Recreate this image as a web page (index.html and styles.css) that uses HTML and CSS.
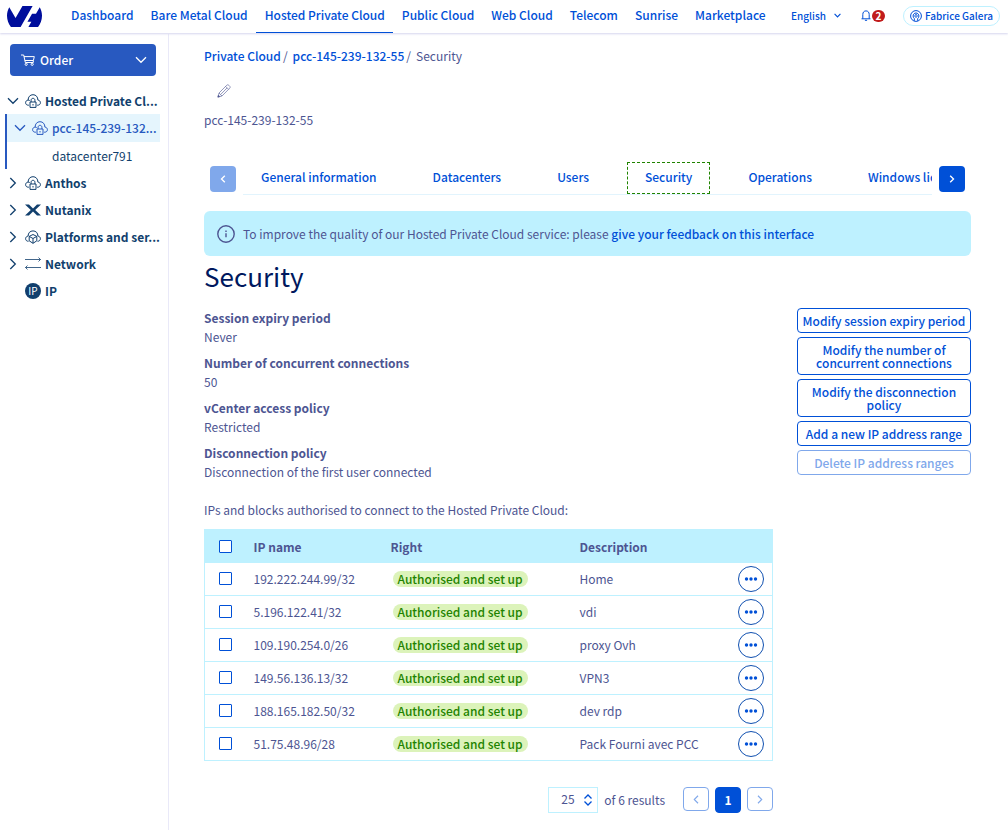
FILE: index.html
```html
<!DOCTYPE html>
<html lang="en">
<head>
<meta charset="utf-8">
<title>Security - Hosted Private Cloud</title>
<link rel="stylesheet" href="styles.css">
</head>
<body>
<svg class="sprite" aria-hidden="true">
  <symbol id="cloud-lock" viewBox="0 0 16 14"><path d="M4 11.200H3.300C1.700 11.200.6 10.200.6 8.700c0-1.500 1.100-2.500 2.500-2.600C3.100 3 5 .7 8 .7s4.900 2.300 4.900 5.400c1.400.1 2.500 1.100 2.500 2.600s-1.100 2.500-2.700 2.500H12M3.100 6.100c.8 0 1.300.2 1.700.7M5 8h6v5.400H5zM6.100 8V6.300c0-1.200.8-2 1.900-2s1.900.8 1.900 2V8M8 10v1.500"/></symbol>
  <symbol id="cloud-cube" viewBox="0 0 16 14"><path d="M3.500 11.300C1.700 11.300.6 10.200.6 8.700c0-1.400 1.100-2.500 2.500-2.600C3.100 3 5 .9 8 .9s4.900 2.100 4.900 5.200c1.400.1 2.500 1.200 2.500 2.600s-1.100 2.600-2.900 2.600M8 4.500l3.800 1.900v4.400L8 13.300l-3.800-2.500V6.400zM4.200 6.400L8 8.500l3.800-2.100M8 8.500v4.800"/></symbol>
  <symbol id="down" viewBox="0 0 12 8"><path d="M1 1.300l5 5 5-5"/></symbol>
  <symbol id="right" viewBox="0 0 8 12"><path d="M1.300 1l5 5-5 5"/></symbol>
  <symbol id="left" viewBox="0 0 8 12"><path d="M6.700 1l-5 5 5 5"/></symbol>
  <symbol id="dots" viewBox="0 0 14 4"><circle cx="2.500" cy="2" r="1.700"/><circle cx="7" cy="2" r="1.700"/><circle cx="11.500" cy="2" r="1.700"/></symbol>
</svg>

<header class="topbar">
  <a class="logo" href="#" aria-label="OVHcloud"><svg viewBox="0 4.85 24 14.3"><path d="M19.881 10.095l2.563-4.450C23.434 7.389 24 9.404 24 11.555c0 2.880-1.017 5.523-2.710 7.594h-6.620l2.040-3.541h-2.696l3.176-5.513zM17.561 4.852L9.333 19.149H2.709C1.014 17.077 0 14.435 0 11.555c0-2.152.57-4.170 1.561-5.918l4.294 7.449 4.751-8.234z"/></svg></a>
  <nav class="mainnav" aria-label="Universes">
    <a href="#">Dashboard</a>
    <a href="#">Bare Metal Cloud</a>
    <a href="#" class="current" aria-current="page">Hosted Private Cloud</a>
    <a href="#">Public Cloud</a>
    <a href="#">Web Cloud</a>
    <a href="#">Telecom</a>
    <a href="#">Sunrise</a>
    <a href="#">Marketplace</a>
  </nav>
  <div class="tools">
    <button type="button" class="language">English <svg class="line chev-s"><use href="#down"/></svg></button>
    <button type="button" class="notif" aria-label="Notifications, 2 unread">
      <svg class="line bell" viewBox="0 0 10 11"><path d="M.5 8.800h9M1.800 8.800V4.500C1.800 2.300 3 .9 5 .9s3.200 1.400 3.200 3.600v4.300M3.900 10.300h2.200"/></svg><span class="count">2</span>
    </button>
    <button type="button" class="account"><svg class="line user" viewBox="0 0 12 12"><circle cx="6" cy="6" r="5.400"/><path d="M4.300 10.800V8.500C3.500 7.900 3.100 7 3.100 6c0-1.700 1.200-3 2.900-3s2.900 1.300 2.900 3c0 1-.4 1.900-1.200 2.500v2.300M5 6.500c0 1 2 1 2 0V5.300c0-1-2-1-2 0z"/></svg>Fabrice Galera</button>
  </div>
</header>

<div class="shell">
  <aside class="sidebar">
    <button type="button" class="order">
      <svg class="line cart" viewBox="0 0 14 12"><path d="M0 1h2.700l1.600 7.500h8M3 2.600h10.300l-.9 3.900H3.900M12.300 6.500v2"/><circle cx="5.200" cy="10.300" r="1.100"/><circle cx="11.200" cy="10.300" r="1.100"/></svg>
      <span>Order</span>
      <svg class="line chev"><use href="#down"/></svg>
    </button>
    <ul class="tree">
      <li><a class="node" href="#" title="Hosted Private Cloud"><svg class="line chev"><use href="#down"/></svg><svg class="line ico"><use href="#cloud-lock"/></svg><span>Hosted Private Cl...</span></a>
        <ul class="branch">
          <li><a class="node active" href="#" title="pcc-145-239-132-55"><svg class="line chev"><use href="#down"/></svg><svg class="line ico"><use href="#cloud-lock"/></svg><span>pcc-145-239-132...</span></a></li>
          <li><a class="node leaf" href="#"><span>datacenter791</span></a></li>
        </ul>
      </li>
      <li><a class="node" href="#"><svg class="line chev"><use href="#right"/></svg><svg class="line ico"><use href="#cloud-lock"/></svg><span>Anthos</span></a></li>
      <li><a class="node" href="#"><svg class="line chev"><use href="#right"/></svg><svg class="ico" viewBox="0 0 16 14"><path fill="currentColor" d="M0 1.500h4L8 5.400l4-3.900h4L10.200 7l5.800 5.500h-4L8 8.600l-4 3.900H0L5.800 7z"/></svg><span>Nutanix</span></a></li>
      <li><a class="node" href="#" title="Platforms and services"><svg class="line chev"><use href="#right"/></svg><svg class="line ico"><use href="#cloud-cube"/></svg><span>Platforms and ser...</span></a></li>
      <li><a class="node" href="#"><svg class="line chev"><use href="#right"/></svg><svg class="line ico thin" viewBox="0 0 16 14"><path d="M0 2.500h15.500M13.500.5l2 2-2 2M16 10.500H.5M2.500 8.500l-2 2 2 2"/></svg><span>Network</span></a></li>
      <li><a class="node" href="#"><i class="chev"></i><i class="ip-ico" aria-hidden="true">IP</i><span>IP</span></a></li>
    </ul>
  </aside>

  <main class="main">
    <nav class="crumbs" aria-label="Breadcrumb"><a href="#">Private Cloud</a><i>/</i><a href="#">pcc-145-239-132-55</a><i>/</i><span>Security</span></nav>
    <button type="button" class="edit" aria-label="Edit name"><svg viewBox="0 0 14 14"><path d="M1 13l1-4L9.800 1.200c.6-.6 1.400-.5 2 .1l.9.900c.6.6.6 1.400 0 2L5 12zM2 9l3 3M8.600 2.400l3 3M3.800 10.300l6.300-6.400"/><path class="tip" d="M.8 13.200l.6-2 1.400 1.400z"/></svg></button>
    <p class="name">pcc-145-239-132-55</p>

    <div class="tabs">
      <button type="button" class="step" disabled aria-label="Previous tabs"><svg class="line"><use href="#left"/></svg></button>
      <nav class="tablist" aria-label="Service sections">
        <a href="#">General information</a>
        <a href="#">Datacenters</a>
        <a href="#">Users</a>
        <a href="#" class="focus" aria-current="page">Security</a>
        <a href="#">Operations</a>
        <a href="#">Windows licence</a>
      </nav>
      <button type="button" class="step" aria-label="Next tabs"><svg class="line"><use href="#right"/></svg></button>
    </div>

    <div class="notice">
      <svg viewBox="0 0 18 18"><circle cx="9" cy="9" r="8.200"/><path d="M9 8.300v4M9 5.500v1.500"/></svg>
      <p>To improve the quality of our Hosted Private Cloud service: please <a href="#">give your feedback on this interface</a></p>
    </div>

    <h1>Security</h1>

    <div class="columns">
      <section class="content">
        <dl class="facts">
          <dt>Session expiry period</dt><dd>Never</dd>
          <dt>Number of concurrent connections</dt><dd>50</dd>
          <dt>vCenter access policy</dt><dd>Restricted</dd>
          <dt>Disconnection policy</dt><dd>Disconnection of the first user connected</dd>
        </dl>
        <p class="intro">IPs and blocks authorised to connect to the Hosted Private Cloud:</p>
        <table class="grid">
          <colgroup><col class="c-check"><col class="c-ip"><col class="c-right"><col><col class="c-act"></colgroup>
          <thead><tr><th><input type="checkbox" aria-label="Select all"></th><th>IP name</th><th>Right</th><th>Description</th><th></th></tr></thead>
          <tbody>
            <tr><td><input type="checkbox" aria-label="Select 192.222.244.99/32"></td><td>192.222.244.99/32</td><td><span class="badge">Authorised and set up</span></td><td>Home</td><td><button type="button" class="more" aria-label="Actions"><svg><use href="#dots"/></svg></button></td></tr>
            <tr><td><input type="checkbox" aria-label="Select 5.196.122.41/32"></td><td>5.196.122.41/32</td><td><span class="badge">Authorised and set up</span></td><td>vdi</td><td><button type="button" class="more" aria-label="Actions"><svg><use href="#dots"/></svg></button></td></tr>
            <tr><td><input type="checkbox" aria-label="Select 109.190.254.0/26"></td><td>109.190.254.0/26</td><td><span class="badge">Authorised and set up</span></td><td>proxy Ovh</td><td><button type="button" class="more" aria-label="Actions"><svg><use href="#dots"/></svg></button></td></tr>
            <tr><td><input type="checkbox" aria-label="Select 149.56.136.13/32"></td><td>149.56.136.13/32</td><td><span class="badge">Authorised and set up</span></td><td>VPN3</td><td><button type="button" class="more" aria-label="Actions"><svg><use href="#dots"/></svg></button></td></tr>
            <tr><td><input type="checkbox" aria-label="Select 188.165.182.50/32"></td><td>188.165.182.50/32</td><td><span class="badge">Authorised and set up</span></td><td>dev rdp</td><td><button type="button" class="more" aria-label="Actions"><svg><use href="#dots"/></svg></button></td></tr>
            <tr><td><input type="checkbox" aria-label="Select 51.75.48.96/28"></td><td>51.75.48.96/28</td><td><span class="badge">Authorised and set up</span></td><td>Pack Fourni avec PCC</td><td><button type="button" class="more" aria-label="Actions"><svg><use href="#dots"/></svg></button></td></tr>
          </tbody>
        </table>
        <div class="pager">
          <label class="size"><select aria-label="Results per page"><option>25</option><option>50</option></select><svg class="line" viewBox="0 0 10 12"><path d="M1.500 4.500L5 1l3.500 3.500M1.500 7.500L5 11l3.500-3.500"/></svg></label>
          <span class="total">of 6 results</span>
          <button type="button" class="page" disabled aria-label="Previous page"><svg class="line"><use href="#left"/></svg></button>
          <button type="button" class="page on">1</button>
          <button type="button" class="page" disabled aria-label="Next page"><svg class="line"><use href="#right"/></svg></button>
        </div>
      </section>
      <aside class="actions">
        <button type="button">Modify session expiry period</button>
        <button type="button">Modify the number of concurrent connections</button>
        <button type="button">Modify the disconnection policy</button>
        <button type="button">Add a new IP address range</button>
        <button type="button" disabled>Delete IP address ranges</button>
      </aside>
    </div>
  </main>
</div>
</body>
</html>
```
FILE: styles.css
```css
:root {
  --blue: #0050d7;
  --ink: #4d5592;
  --sky: #bef1ff;
  --faded: #80a8eb;
  --navy: #113f6d;
}
* { box-sizing: border-box; }
body {
  margin: 0;
  min-height: 100vh;
  display: flex;
  flex-direction: column;
  background: #fff;
  color: var(--ink);
  font: 12px/20px "Noto Sans CJK SC", "Noto Sans", sans-serif;
}
a { color: var(--blue); text-decoration: none; font-weight: 500; }
button, select { font: inherit; color: inherit; background: none; border: 0; padding: 0; margin: 0; }
p, ul, dl, dd, h1 { margin: 0; padding: 0; }
ul { list-style: none; }
i { font-style: normal; }
.sprite { display: none; }
svg { display: block; flex: none; }
.line { fill: none; stroke: currentColor; stroke-width: 1; }

.topbar {
  display: flex;
  align-items: center;
  height: 33px;
  padding: 0 8px 0 7px;
  box-shadow: 0 1px 2px #d5d5ee;
  position: relative;
}
.logo svg { width: 35px; height: 21px; fill: #000e9c; }
.mainnav { display: flex; margin-left: 20px; align-self: stretch; }
.mainnav a { display: flex; align-items: center; padding: 0 8px 2px 9px; white-space: nowrap; border-bottom: 1px solid transparent; }
.mainnav .current { border-color: var(--blue); }
.tools { display: flex; align-items: center; margin-left: auto; padding-bottom: 2px; color: var(--blue); font-size: 10px; font-weight: 500; }
.tools button { display: flex; align-items: center; white-space: nowrap; }
.chev-s { width: 7px; height: 5px; margin-left: 8px; stroke-width: 2; }
.notif { margin: 0 18px 0 20px; }
.bell { width: 10px; height: 11px; }
.count { width: 13px; height: 12px; border-radius: 6px; background: #c11b1b; color: #fff; font-weight: 700; line-height: 12px; text-align: center; margin-left: 1px; }
.tools .account { height: 20px; padding: 0 6px; border: 1px solid var(--sky); border-radius: 10px; gap: 3px; }
.user { width: 12px; height: 12px; }

.shell { display: flex; flex: 1; margin-top: 1px; }
.sidebar { width: 169px; flex: none; padding-top: 10px; border-right: 1px solid #e9e9f8; color: var(--navy); }
.order {
  display: flex; align-items: center; gap: 5px;
  width: 146px; height: 32px; margin: 0 0 11px 10px; padding: 0 9px 0 11px;
  background: #2859c0; color: #fff; border-radius: 4px; font-weight: 500;
}
.order .cart { width: 14px; height: 12px; }
.order .chev { margin-left: auto; width: 12px; stroke-width: 1.3; }
.node { display: flex; align-items: center; height: 27px; padding: 0 8px 0 7px; color: inherit; font-weight: 700; }
.node .chev { width: 12px; height: 12px; margin-right: 6px; stroke-width: 1.3; }
.chev { height: 8px; }
.ico { width: 16px; height: 14px; margin-right: 4px; }
.thin { stroke-width: .8; }
.node span { white-space: nowrap; }
.branch { margin: 0 8px 0 5px; border-left: 2px solid #2859c0; }
.branch .node { padding-right: 0; }
.node.active { height: 28px; background: #e5f5fd; color: #2859c0; font-weight: 500; }
.node.leaf { padding-left: 45px; font-weight: 400; }
.ip-ico { width: 16px; height: 16px; margin-right: 4px; border-radius: 8px; background: var(--navy); color: #fff; font-size: 10px; line-height: 16px; text-align: center; font-weight: 400; }

.main { flex: 1; min-width: 0; padding: 12px 37px 16px 35px; }
.crumbs { display: flex; }
.crumbs i { margin: 0 5px 0 2px; }
.edit { display: block; margin: 18px 0 0 13px; }
.edit svg { width: 14px; height: 14px; fill: none; stroke: var(--ink); stroke-width: .6; }
.edit .tip { fill: var(--ink); }
.name { margin-top: 12px; }

.tabs { display: flex; align-items: center; gap: 7px; margin-top: 32px; padding: 0 6px; }
.step { width: 26px; height: 26px; flex: none; display: grid; place-items: center; border-radius: 4px; background: var(--blue); color: #fff; }
.step svg { width: 6px; height: 8px; stroke-width: 2; }
.step:disabled { background: var(--faded); }
.tablist { display: flex; flex: 1; min-width: 0; overflow: hidden; gap: 20px; border-bottom: 1px solid #e2f4fd; }
.tablist a { flex: none; padding: 4px 17px 6px; border: 1px solid transparent; white-space: nowrap; }
.tablist .focus { border: 1px dashed #1f8300; }

.notice { display: flex; align-items: center; gap: 8px; min-height: 45px; margin-top: 16px; padding: 8px 13px; border-radius: 6px; background: var(--sky); }
.notice svg { width: 18px; height: 18px; fill: none; stroke: var(--ink); stroke-width: 1.4; }
h1 { margin-top: 2px; color: #00185e; font-size: 26px; line-height: 36px; font-weight: 400; }

.columns { display: grid; grid-template-columns: minmax(0, 1fr) 174px; gap: 24px; margin-top: 14px; align-items: start; }
.facts dt { font-weight: 700; }
.facts dd { margin-bottom: 8px; line-height: 17px; }
.intro { margin-top: 20px; }
.grid { width: 100%; margin-top: 9px; table-layout: fixed; border-collapse: collapse; border: 1px solid var(--sky); }
.c-check { width: 40px; }
.c-ip { width: 137px; }
.c-right { width: 189px; }
.c-act { width: 48px; }
.grid th, .grid td { height: 33px; padding: 0 0 0 9px; text-align: left; white-space: nowrap; border-bottom: 1px solid var(--sky); }
.grid th { background: var(--sky); font-weight: 700; padding-top: 2px; }
.grid th:first-child, .grid td:first-child { padding-left: 14px; }
.grid th:last-child, .grid td:last-child { padding-left: 13px; }
input[type="checkbox"] { appearance: none; display: block; width: 13px; height: 13px; margin: 0 0 2px; border: 1px solid var(--blue); border-radius: 1px; background: #fff; }
.badge { display: inline-block; margin-left: 2px; padding: 0 5px; border-radius: 8px; background: #dcf3ba; color: #1f8300; font-weight: 500; line-height: 16px; }
.more { display: grid; place-items: center; width: 26px; height: 26px; border: 1px solid #1050b0; border-radius: 50%; }
.more svg { width: 14px; height: 4px; fill: var(--blue); }

.pager { display: flex; align-items: flex-start; justify-content: flex-end; gap: 6px; margin-top: 26px; }
.size { position: relative; }
.size select { appearance: none; width: 50px; height: 26px; padding: 0 12px 2px; border: 1px solid var(--sky); }
.size svg { position: absolute; right: 5px; top: 7px; width: 10px; height: 12px; color: var(--blue); stroke-width: 1.3; pointer-events: none; }
.total { line-height: 26px; margin-right: 12px; }
.page { width: 26px; height: 24px; display: grid; place-items: center; border: 1px solid var(--faded); border-radius: 4px; color: var(--faded); }
.page svg { width: 6px; height: 9px; stroke-width: 1.5; }
.page.on { height: 26px; background: var(--blue); border-color: var(--blue); color: #fff; font-weight: 700; }

.actions { display: flex; flex-direction: column; gap: 4px; }
.actions button { padding: 5px 3px; border: 1px solid var(--blue); border-radius: 4px; color: var(--blue); font-weight: 500; line-height: 13px; }
.actions button:disabled { border-color: var(--faded); color: var(--faded); }
```
